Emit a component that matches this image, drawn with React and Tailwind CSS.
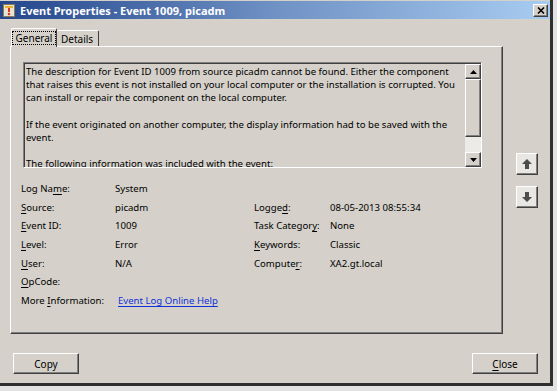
import React from 'react';

// classic 3D borders
const raised =
    'border border-t-white border-l-white border-r-[#404040] border-b-[#404040] shadow-[inset_-1px_-1px_0_#808080]';
const sunken =
    'border border-t-[#808080] border-l-[#808080] border-r-white border-b-white shadow-[inset_1px_1px_0_#404040]';

const Acc = ({ pre = '', u = '', post = '' }) => (
    <span>
        {pre}
        <span className="underline underline-offset-2">{u}</span>
        {post}
    </span>
);

const descLines = [
    'The description for Event ID 1009 from source picadm cannot be found. Either the component',
    'that raises this event is not installed on your local computer or the installation is corrupted. You',
    'can install or repair the component on the local computer.',
    '',
    'If the event originated on another computer, the display information had to be saved with the',
    'event.',
    '',
    'The following information was included with the event:',
];

const rows = [
    [{ pre: 'Log Na', u: 'm', post: 'e:' }, 'System', null, ''],
    [{ u: 'S', post: 'ource:' }, 'picadm', { pre: 'Logge', u: 'd', post: ':' }, '08-05-2013 08:55:34'],
    [{ u: 'E', post: 'vent ID:' }, '1009', { pre: 'Task Categor', u: 'y', post: ':' }, 'None'],
    [{ u: 'L', post: 'evel:' }, 'Error', { u: 'K', post: 'eywords:' }, 'Classic'],
    [{ u: 'U', post: 'ser:' }, 'N/A', { pre: 'Compute', u: 'r', post: ':' }, 'XA2.gt.local'],
    [{ u: 'O', post: 'pCode:' }, '', null, ''],
];

const BlockArrow = ({ down }) => (
    <svg width="12" height="12" viewBox="0 0 12 12" className={down ? 'rotate-180' : ''}>
        <polygon points="6,1 11,6 8,6 8,11 4,11 4,6 1,6" fill="#4d4d4d" />
        <polyline points="1,6 6,1" stroke="#8a8a8a" strokeWidth="0.6" fill="none" />
    </svg>
);

const Tri = ({ down }) => (
    <svg width="7" height="4" viewBox="0 0 7 4">
        <polygon points={down ? '0,0 7,0 3.5,4' : '3.5,0 7,4 0,4'} fill="#000" />
    </svg>
);

const EventIcon = () => (
    <svg width="12" height="13" viewBox="0 0 12 13">
        <rect x="0.5" y="0.5" width="11" height="12" fill="#e9e4d2" stroke="#8c7b52" />
        <rect x="2" y="2" width="8" height="2" fill="#e8b432" />
        <rect x="5" y="4" width="2" height="4" fill="#d63a1e" />
        <circle cx="6" cy="10" r="1.3" fill="#d63a1e" />
    </svg>
);

export default function App() {
    return (
        <div className="w-[557px] h-[391px] bg-[#e2e2e2] overflow-hidden font-['Noto_Sans',sans-serif] text-[9.6px] text-black">
            <div className="w-[553px] h-[386px] flex flex-col bg-[#d5d1ca] border-r-[3px] border-b-[3px] border-[#2f2f2f]">
                {/* title bar */}
                <div className="h-[18px] mt-[1px] flex items-center bg-linear-to-r from-[#24468c] via-[#6f91c4] to-[#a8ccf1] pl-[3px] pr-[2px]">
                    <EventIcon />
                    <span className="ml-[5px] text-white font-bold text-[11px] leading-none">
                        Event Properties - Event 1009, picadm
                    </span>
                    <div className={`ml-auto w-[15px] h-[13px] bg-[#d5d1ca] flex items-center justify-center ${raised}`}>
                        <svg width="8" height="7" viewBox="0 0 8 7">
                            <path d="M1 0.5 L7 6.5 M7 0.5 L1 6.5" stroke="#000" strokeWidth="1.6" />
                        </svg>
                    </div>
                </div>

                <div className="pl-[10px] pt-[9px] flex flex-col">
                    {/* tabs */}
                    <div className="flex items-end pl-[1px] h-[18px] text-[10px]">
                        <div className="relative z-10 w-[46px] h-[19px] -mb-[1px] bg-[#d5d1ca] border-t border-l border-t-white border-l-white border-r border-r-[#404040] rounded-t-[2px] flex items-start justify-center pt-[2px]">
                            <span className="border border-dotted border-black px-[3px] leading-[12px]">General</span>
                        </div>
                        <div className="w-[42px] h-[16px] border-t border-t-white border-r border-r-[#404040] rounded-t-[2px] flex items-center pl-[4px] leading-none">
                            Details
                        </div>
                    </div>

                    <div className="flex">
                        {/* tab page */}
                        <div className={`w-[493px] h-[288px] pl-[12px] pt-[15px] flex flex-col ${raised}`}>
                            <div className={`w-[459px] h-[106px] flex bg-[#d5d1ca] ${sunken} pl-[1px] pt-[1px]`}>
                                <div className="flex-1 overflow-hidden pt-[1px] pl-[1px] leading-[13.2px]">
                                    {descLines.map((l, i) => (
                                        <div key={i} className="whitespace-nowrap h-[13.2px]">
                                            {l}
                                        </div>
                                    ))}
                                </div>
                                <div className="w-[16px] flex flex-col">
                                    <div className={`h-[15px] bg-[#d5d1ca] flex items-center justify-center ${raised}`}>
                                        <Tri />
                                    </div>
                                    <div className={`h-[58px] bg-[#d5d1ca] ${raised}`} />
                                    <div className="flex-1 bg-[#ecebe8]" />
                                    <div className={`h-[15px] bg-[#d5d1ca] flex items-center justify-center ${raised}`}>
                                        <Tri down />
                                    </div>
                                </div>
                            </div>

                            <div className="mt-[12px] -ml-[2px] grid grid-cols-[94px_139px_76px_1fr] leading-[18.67px]">
                                {rows.map((r, i) => (
                                    <React.Fragment key={i}>
                                        <Acc {...r[0]} />
                                        <span>{r[1]}</span>
                                        {r[2] ? <Acc {...r[2]} /> : <span />}
                                        <span>{r[3]}</span>
                                    </React.Fragment>
                                ))}
                                <Acc pre="More " u="I" post="nformation:" />
                                <a className="ml-[3px] col-span-3 text-[#0f31d8] underline underline-offset-2 cursor-pointer">
                                    Event Log Online Help
                                </a>
                            </div>
                        </div>

                        {/* previous / next buttons */}
                        <div className="ml-[13px] mt-[107px] flex flex-col gap-[11px]">
                            <button className={`w-[22px] h-[22px] bg-[#e9e7e3] flex items-center justify-center ${raised}`}>
                                <BlockArrow />
                            </button>
                            <button className={`w-[22px] h-[22px] bg-[#e9e7e3] flex items-center justify-center ${raised}`}>
                                <BlockArrow down />
                            </button>
                        </div>
                    </div>
                </div>

                {/* bottom buttons */}
                <div className="flex justify-between pl-[13px] pr-[12px] mt-[19px]">
                    <button className={`w-[66px] h-[21px] bg-[#d5d1ca] text-[10px] leading-none ${raised}`}>Copy</button>
                    <button className={`w-[66px] h-[21px] bg-[#d5d1ca] text-[10px] leading-none ${raised}`}>
                        <Acc u="C" post="lose" />
                    </button>
                </div>
            </div>
        </div>
    );
}
